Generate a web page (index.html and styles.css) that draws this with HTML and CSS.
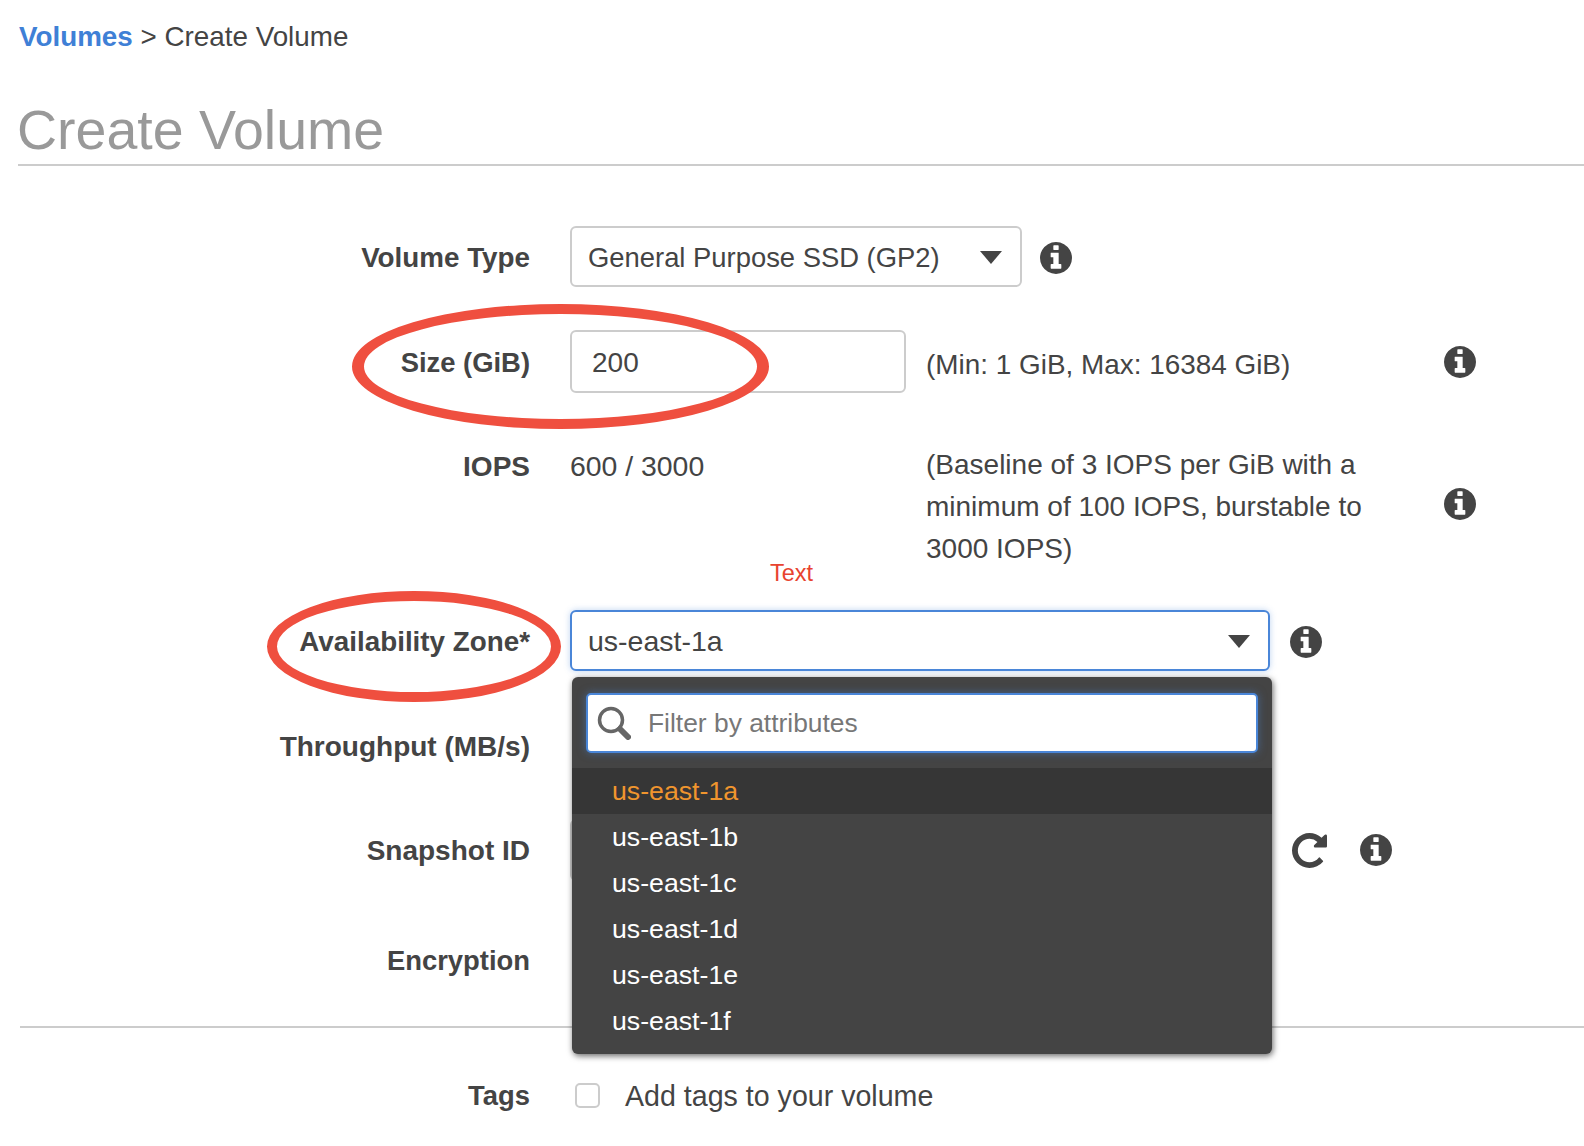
FILE: index.html
```html
<!DOCTYPE html>
<html>
<head>
    <meta charset="UTF-8">
    <title>Create Volume</title>
    <link rel="stylesheet" href="styles.css">
</head>
<body>
    <svg class="icon-defs" width="0" height="0">
        <symbol id="info" viewBox="0 0 1536 1536">
            <path d="M1024 1248v-160q0-14-9-23t-23-9h-96v-512q0-14-9-23t-23-9h-320q-14 0-23 9t-9 23v160q0 14 9 23t23 9h96v320h-96q-14 0-23 9t-9 23v160q0 14 9 23t23 9h448q14 0 23-9t9-23zm-128-896v-160q0-14-9-23t-23-9h-192q-14 0-23 9t-9 23v160q0 14 9 23t23 9h192q14 0 23-9t9-23zm640 416q0 209-103 385.5t-279.5 279.5-385.5 103-385.5-103-279.5-279.5-103-385.5 103-385.5 279.5-279.5 385.5-103 385.5 103 279.5 279.5 103 385.5z"/>
        </symbol>
    </svg>

    <div class="crumbs"><a class="crumb-link">Volumes</a> &gt; Create Volume</div>
    <h1 class="page-title">Create Volume</h1>

    <form class="volume-form">
        <div class="row row-type">
            <label class="row-label label-tight">Volume Type</label>
            <div class="select select-type">General Purpose SSD (GP2)</div>
            <svg class="info info-type"><use href="#info"/></svg>
        </div>

        <div class="row row-size">
            <label class="row-label label-narrow">Size (GiB)</label>
            <div class="input input-size">200</div>
            <p class="hint hint-size">(Min: 1 GiB, Max: 16384 GiB)</p>
            <svg class="info info-far"><use href="#info"/></svg>
        </div>

        <div class="row row-iops">
            <label class="row-label">IOPS</label>
            <div class="iops-value">600 / 3000</div>
            <p class="hint hint-iops">(Baseline of 3 IOPS per GiB with a minimum of 100 IOPS, burstable to 3000 IOPS)</p>
            <svg class="info info-far"><use href="#info"/></svg>
            <span class="red-note">Text</span>
        </div>

        <div class="row row-zone">
            <label class="row-label label-tight">Availability Zone*</label>
            <div class="zone-wrap">
                <div class="select select-zone">us-east-1a</div>
                <div class="menu">
                    <div class="menu-filter">
                        <div class="filter-box">
                            <svg class="search-icon" viewBox="0 0 34 34">
                                <circle cx="14" cy="14" r="11.5"/>
                                <line x1="23" y1="23" x2="31" y2="31"/>
                            </svg>
                            <span>Filter by attributes</span>
                        </div>
                    </div>
                    <ul class="menu-list">
                        <li class="current">us-east-1a</li>
                        <li>us-east-1b</li>
                        <li>us-east-1c</li>
                        <li>us-east-1d</li>
                        <li>us-east-1e</li>
                        <li>us-east-1f</li>
                    </ul>
                </div>
            </div>
            <svg class="info info-zone"><use href="#info"/></svg>
        </div>

        <div class="row row-through">
            <label class="row-label">Throughput (MB/s)</label>
        </div>

        <div class="row row-snapshot">
            <label class="row-label">Snapshot ID</label>
            <div class="input input-snapshot"></div>
            <svg class="refresh" viewBox="0 128 1536 1536">
                <path d="M1536 256v448q0 26-19 45t-45 19h-448q-42 0-59-40-17-39 14-69l138-138q-148-137-349-137-104 0-198.5 40.5t-163.5 109.5-109.5 163.5-40.5 198.5 40.5 198.5 109.5 163.5 163.5 109.5 198.5 40.5q119 0 225-52t179-147q7-10 23-12 15 0 25 9l137 138q9 8 9.5 20.5t-7.5 22.5q-109 132-264 204.5t-327 72.5q-156 0-298-61t-245-164-164-245-61-298 61-298 164-245 245-164 298-61q147 0 284.5 55.5t244.5 156.5l130-129q29-31 70-14 39 17 39 59z"/>
            </svg>
            <svg class="info info-snapshot"><use href="#info"/></svg>
        </div>

        <div class="row row-encrypt">
            <label class="row-label label-narrow">Encryption</label>
        </div>

        <hr class="divider">

        <div class="row row-tags">
            <label class="row-label label-narrow">Tags</label>
            <span class="checkbox"></span>
            <span class="check-text">Add tags to your volume</span>
        </div>
    </form>

    <!-- red rings drawn over the page -->
    <div class="ring ring-size"></div>
    <div class="ring ring-zone"></div>
</body>
</html>
```

FILE: styles.css
```css
* {
    box-sizing: border-box;
}

body {
    font-family: "Liberation Sans", Arial, sans-serif;
    font-size: 28px;
    color: #444;
    background-color: #fff;
    margin: 0;
    padding: 0;
    height: 1146px;
    overflow: hidden;
    position: relative;
}

.icon-defs {
    position: absolute;
}

.crumbs {
    padding: 21px 0 0 19px;
    height: 65px;
    font-size: 27.8px;
    line-height: 32px;
}

.crumb-link {
    color: #3f80d6;
    font-weight: bold;
}

.page-title {
    margin: 0 0 0 18px;
    height: 101px;
    padding-top: 32px;
    font-size: 55.5px;
    line-height: 66px;
    font-weight: normal;
    text-indent: -1px;
    color: #999;
    border-bottom: 2px solid #ccc;
}

.volume-form {
    padding-top: 60px;
}

.row {
    display: flex;
    align-items: center;
    height: 61px;
    margin-bottom: 43px;
    position: relative;
}

.row-label {
    width: 530px;
    flex-shrink: 0;
    text-align: right;
    font-weight: bold;
    margin-right: 40px;
    padding-top: 2px;
}

.label-tight {
    font-size: 27.8px;
}

.label-narrow {
    font-size: 27.4px;
}

.select,
.input {
    display: flex;
    align-items: center;
    height: 100%;
    background-color: #fff;
    border: 2px solid #ccc;
    border-radius: 6px;
    padding: 2px 0 0 16px;
    position: relative;
}

.select::after {
    content: "";
    position: absolute;
    top: 23px;
    right: 18px;
    border-top: 13px solid #444;
    border-left: 11.5px solid transparent;
    border-right: 11.5px solid transparent;
}

.select-type {
    width: 452px;
    font-size: 27.4px;
}

.input-size {
    width: 336px;
    padding-left: 20px;
}

.input-snapshot {
    width: 600px;
}

.row-size {
    height: 63px;
    margin-bottom: 51px;
}

.hint {
    margin: 0 0 0 20px;
    line-height: 42px;
}

.hint-size {
    margin-top: 6px;
    font-size: 27.9px;
}

.info {
    width: 32px;
    height: 32px;
    fill: #444;
    flex-shrink: 0;
}

.info-type {
    margin: 2px 0 0 18px;
}

.info-far {
    position: absolute;
    left: 1444px;
    top: 16px;
}

.row-iops {
    height: 124px;
    margin-bottom: 42px;
    align-items: flex-start;
}

.row-iops .row-label {
    line-height: 42px;
}

.iops-value {
    width: 356px;
    font-size: 28.4px;
    line-height: 44px;
}

.hint-iops {
    margin-left: 0;
    width: 460px;
}

.row-iops .info-far {
    top: 44px;
}

.red-note {
    position: absolute;
    left: 770px;
    top: 114px;
    font-size: 23.5px;
    line-height: 30px;
    color: #e8432f;
}

.zone-wrap {
    width: 700px;
    height: 100%;
    position: relative;
}

.select-zone {
    font-size: 28.5px;
    border-color: #4a86d8;
    box-shadow: 0 0 6px rgba(74, 134, 216, 0.35);
}

.info-zone {
    margin: 2px 0 0 20px;
}

.menu {
    position: absolute;
    z-index: 2;
    top: 67px;
    left: 2px;
    width: 700px;
    height: 377px;
    background-color: #444;
    border-radius: 6px;
    box-shadow: 1px 2px 6px rgba(0, 0, 0, 0.6);
    color: #fff;
}

.menu-filter {
    height: 91px;
    padding: 16px 14px 0 14px;
}

.filter-box {
    display: flex;
    align-items: center;
    height: 60px;
    background-color: #fff;
    border: 2px solid #4a86d8;
    border-radius: 5px;
    box-shadow: 0 0 8px rgba(74, 134, 216, 0.5);
    color: #777;
    font-size: 26.4px;
    padding-left: 9px;
}

.search-icon {
    width: 34px;
    height: 34px;
    margin-right: 17px;
    fill: none;
    stroke: #666;
    filter: blur(0.5px);
}

.search-icon circle {
    stroke-width: 3.5;
}

.search-icon line {
    stroke-width: 6;
    stroke-linecap: round;
}

.menu-list {
    list-style: none;
    margin: 0;
    padding: 0;
    font-size: 26.7px;
}

.menu-list li {
    height: 46px;
    line-height: 46px;
    padding-left: 40px;
}

.menu-list .current {
    background-color: #363636;
    color: #f0952e;
}

.row-through {
    height: 62px;
}

.row-through .row-label {
    padding-top: 4px;
}

.row-snapshot {
    height: 62px;
    margin-bottom: 48px;
}

.refresh {
    position: absolute;
    left: 1292px;
    top: 14px;
    width: 35px;
    height: 35px;
    fill: #444;
    filter: blur(0.4px);
}

.info-snapshot {
    position: absolute;
    left: 1360px;
    top: 15px;
}

.row-encrypt {
    height: 62px;
    margin-bottom: 35px;
}

.divider {
    margin: 0 0 37px 20px;
    border: 0;
    border-top: 2px solid #ccc;
}

.row-tags .row-label {
    padding-top: 0;
}

.checkbox {
    width: 25px;
    height: 25px;
    margin-left: 5px;
    border: 2px solid #ccc;
    border-radius: 5px;
}

.check-text {
    margin-left: 25px;
    padding-top: 1px;
    font-size: 28.6px;
}

.ring {
    position: absolute;
    z-index: 3;
    border: 10px solid #ef4f3f;
    border-radius: 50%;
}

.ring-size {
    left: 352px;
    top: 304px;
    width: 417px;
    height: 125px;
    border-width: 10.5px 12px;
}

.ring-zone {
    left: 267px;
    top: 591px;
    width: 294px;
    height: 111px;
}
```
